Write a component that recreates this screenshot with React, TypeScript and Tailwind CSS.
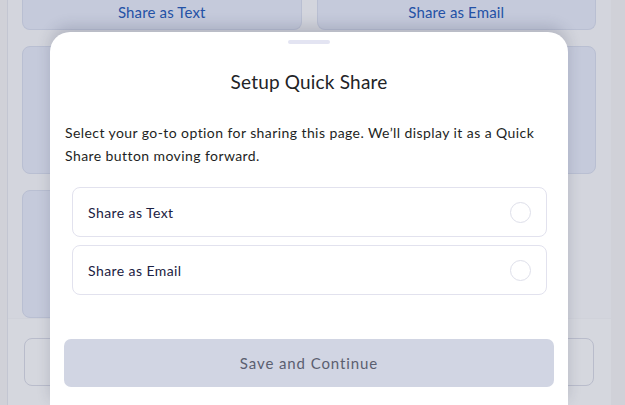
import { useState } from 'react';

const options = ['Share as Text', 'Share as Email'];

export default function App() {
  const [selected, setSelected] = useState<string | null>(null);

  return (
    <div className="relative h-[405px] w-full overflow-hidden bg-[#d0d1d8] font-['Lato',sans-serif]">
      {/* page behind the sheet */}
      <div className="ml-[7px] flex h-full w-[604px] flex-col border-l border-[#c3c6d2] bg-[#d3d5dd]">
        <div className="-mt-[14px] grid grid-cols-2 gap-x-[15px] gap-y-4 pl-[14px] pr-[15px]">
          <button className="h-[44px] rounded-b-lg border border-t-0 border-[#b9bfd2] bg-[#c5cadb] pt-[10px] text-[15px] tracking-[0.01em] text-[#2452a6]">
            Share as Text
          </button>
          <button className="h-[44px] rounded-b-lg border border-t-0 border-[#b9bfd2] bg-[#c5cadb] pt-[10px] text-[15px] tracking-[0.01em] text-[#2452a6]">
            Share as Email
          </button>
          <div className="h-[128px] rounded-lg border border-[#b9bfd2] bg-[#c5cadb]" />
          <div className="h-[128px] rounded-lg border border-[#b9bfd2] bg-[#c5cadb]" />
          <div className="h-[128px] rounded-lg border border-[#b9bfd2] bg-[#c5cadb]" />
        </div>
        <div className="flex flex-1 gap-[15px] border-t border-[#d0d2da] bg-[#d5d7de] pl-4 pr-[17px] pt-[19px]">
          <div className="h-[48px] flex-1 rounded-lg border border-[#b9bccb]" />
          <div className="h-[48px] flex-1 rounded-lg border border-[#b9bccb]" />
        </div>
      </div>

      {/* bottom sheet */}
      <div className="absolute left-[50px] top-[32px] h-[373px] w-[518px] rounded-t-[20px] bg-white shadow-[0_-6px_14px_rgba(40,45,70,0.18)]">
        <div className="mx-auto mt-[8px] h-[4px] w-[42px] rounded-full bg-[#e3e4f2]" />
        <h2 className="mt-[25px] text-center text-[19px] leading-[26px] tracking-[0.01em] text-[#222326]">
          Setup Quick Share
        </h2>
        <p className="mt-[26px] px-[15px] text-[14px] leading-[23px] tracking-[0.03em] text-[#1e1f24]">
          Select your go-to option for sharing this page. We’ll display it as a Quick Share button moving
          forward.
        </p>
        <div className="mt-[20px] flex flex-col gap-[8px] pl-[22px] pr-[21px]">
          {options.map((option) => (
            <button
              key={option}
              onClick={() => setSelected(option)}
              className="flex h-[50px] items-center justify-between rounded-lg border border-[#e2e2ee] px-[15px] text-left text-[14px] tracking-[0.03em] text-[#1b2142]"
            >
              <span>{option}</span>
              <span
                className={`h-[21px] w-[21px] rounded-full ${
                  selected === option ? 'border-[6px] border-[#2452a6]' : 'border-[1.5px] border-[#dedfea]'
                }`}
              />
            </button>
          ))}
        </div>
        <div className="mt-[44px] px-[14px]">
          <button className="h-[48px] w-full rounded-[7px] bg-[#d1d5e3] text-[15px] tracking-[0.06em] text-[#5b5f70]">
            Save and Continue
          </button>
        </div>
      </div>
    </div>
  );
}
